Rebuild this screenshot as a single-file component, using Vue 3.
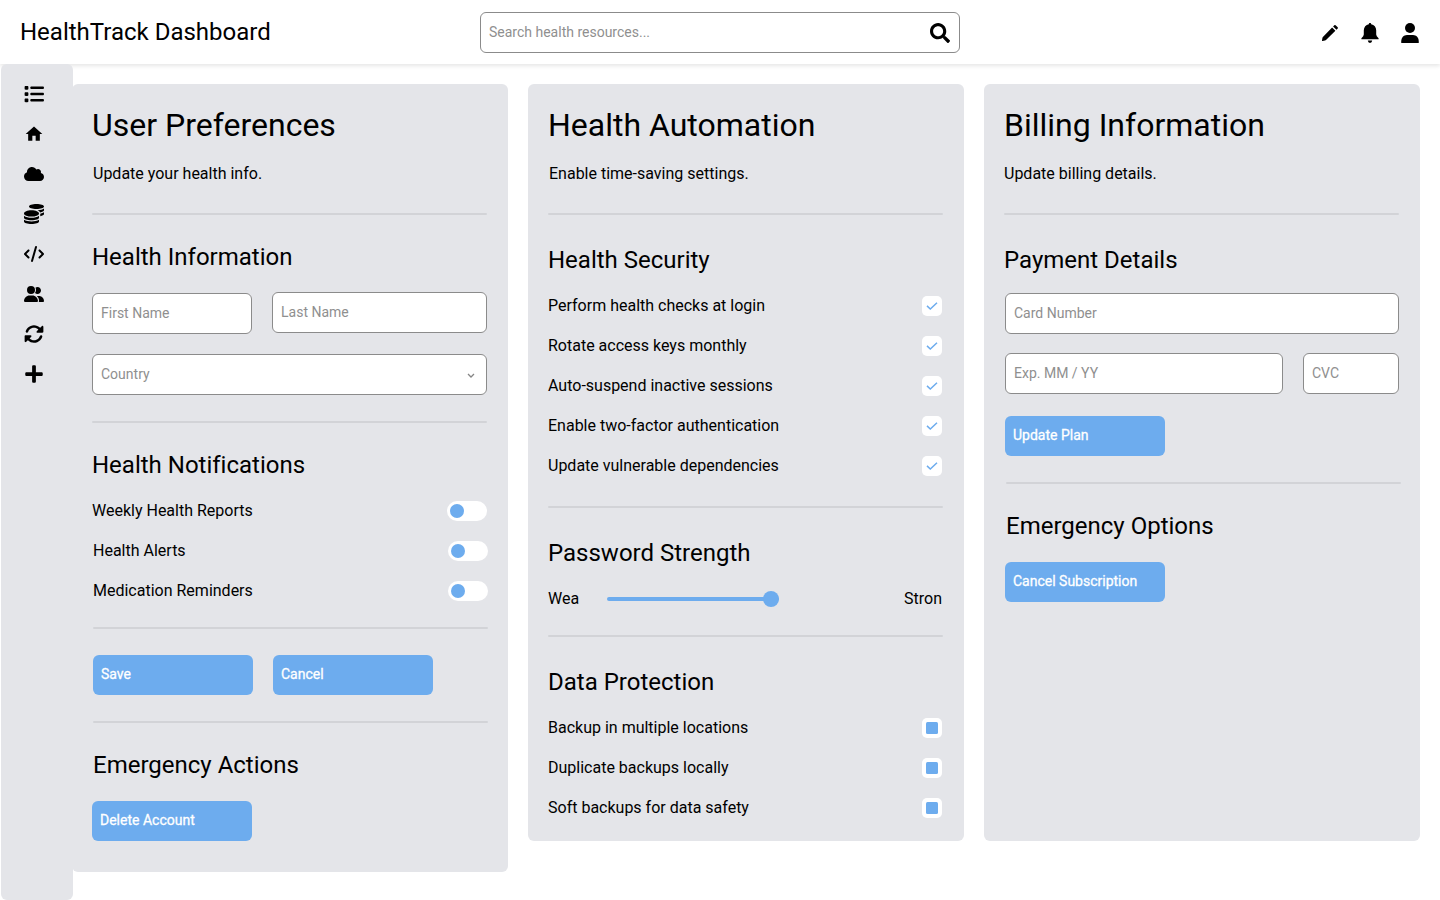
<script setup>
const nav = [
  { name: 'list', w: 20, h: 20, box: '0 0 512 512', d: 'M40 48C26.7 48 16 58.7 16 72v48c0 13.3 10.7 24 24 24H88c13.3 0 24-10.7 24-24V72c0-13.3-10.7-24-24-24H40zM192 64c-17.7 0-32 14.3-32 32s14.3 32 32 32H480c17.7 0 32-14.3 32-32s-14.3-32-32-32H192zm0 160c-17.7 0-32 14.3-32 32s14.3 32 32 32H480c17.7 0 32-14.3 32-32s-14.3-32-32-32H192zm0 160c-17.7 0-32 14.3-32 32s14.3 32 32 32H480c17.7 0 32-14.3 32-32s-14.3-32-32-32H192zM16 232v48c0 13.3 10.7 24 24 24H88c13.3 0 24-10.7 24-24V232c0-13.3-10.7-24-24-24H40c-13.3 0-24 10.7-24 24zM40 368c-13.3 0-24 10.7-24 24v48c0 13.3 10.7 24 24 24H88c13.3 0 24-10.7 24-24V392c0-13.3-10.7-24-24-24H40z' },
  { name: 'home', w: 20, h: 20, box: '0 0 24 24', d: 'M10 20v-6h4v6h5v-8h3L12 3 2 12h3v8z' },
  { name: 'cloud', w: 20, h: 16, box: '0 0 640 512', d: 'M537.6 226.6c4.1-10.7 6.4-22.4 6.4-34.6 0-53-43-96-96-96-19.7 0-38.1 6-53.3 16.2C367 64.2 315.3 32 256 32c-88.4 0-160 71.6-160 160 0 2.7.1 5.4.2 8.1C40.2 219.8 0 273.2 0 336c0 79.5 64.5 144 144 144h368c70.7 0 128-57.3 128-128 0-61.9-44-113.6-102.4-125.4z' },
  { name: 'coins', w: 20, h: 20, box: '0 0 512 512', d: 'M0 405.3V448c0 35.3 86 64 192 64s192-28.7 192-64v-42.7C342.7 434.4 267.2 448 192 448S41.3 434.4 0 405.3zM320 128c106 0 192-28.7 192-64S426 0 320 0 128 28.7 128 64s86 64 192 64zM0 300.4V352c0 35.3 86 64 192 64s192-28.7 192-64v-51.6c-41.3 34-116.9 51.6-192 51.6S41.3 334.4 0 300.4zm416 11c57.3-11.1 96-31.7 96-55.4v-42.7c-23.2 16.4-57.3 27.6-96 34.5v63.6zM192 160C86 160 0 195.8 0 240s86 80 192 80 192-35.8 192-80-86-80-192-80zm219.3 56.3c60-10.8 100.7-32 100.7-56.3v-42.7c-35.5 25.1-96.5 38.6-160.7 41.8 29.5 14.3 51.2 33.5 60 57.2z' },
  { name: 'code', w: 20, h: 16, box: '0 0 640 512', d: 'M392.8 1.2c-17-4.9-34.7 5-39.6 22l-128 448c-4.9 17 5 34.7 22 39.6s34.7-5 39.6-22l128-448c4.9-17-5-34.7-22-39.6zm80.6 120.1c-12.5 12.5-12.5 32.8 0 45.3L562.7 256l-89.4 89.4c-12.5 12.5-12.5 32.8 0 45.3s32.8 12.5 45.3 0l112-112c12.5-12.5 12.5-32.8 0-45.3l-112-112c-12.5-12.5-32.8-12.5-45.3 0zm-306.7 0c-12.5-12.5-32.8-12.5-45.3 0l-112 112c-12.5 12.5-12.5 32.8 0 45.3l112 112c12.5 12.5 32.8 12.5 45.3 0s12.5-32.8 0-45.3L77.3 256l89.4-89.4c12.5-12.5 12.5-32.8 0-45.3z' },
  { name: 'people', w: 20, h: 16, box: '0 0 640 512', d: 'M96 128a128 128 0 1 1 256 0A128 128 0 1 1 96 128zM0 482.3C0 383.8 79.8 304 178.3 304h91.4C368.2 304 448 383.8 448 482.3c0 16.4-13.3 29.7-29.7 29.7H29.7C13.3 512 0 498.7 0 482.3zM609.3 512H471.4c5.4-9.4 8.6-20.3 8.6-32v-8c0-60.7-27.1-115.2-69.8-151.8c2.4-.1 4.7-.2 7.1-.2h61.4C567.8 320 640 392.2 640 481.3c0 17-13.8 30.7-30.7 30.7zM432 256c-31 0-59-12.6-79.3-32.9C372.4 196.5 384 163.6 384 128c0-26.8-6.6-52.1-18.3-74.3C384.3 40.1 407.2 32 432 32c61.9 0 112 50.1 112 112s-50.1 112-112 112z' },
  { name: 'sync', w: 20, h: 20, box: '0 0 512 512', d: 'M142.9 142.9c62.2-62.2 162.7-62.5 225.3-1L327 183c-6.9 6.9-8.9 17.2-5.2 26.2s12.5 14.8 22.2 14.8H472c13.3 0 24-10.7 24-24V72c0-9.7-5.8-18.5-14.8-22.2s-19.3-1.7-26.2 5.2L413.4 96.6c-87.6-86.5-228.7-86.2-315.8 1C73.2 122 55.6 150.7 44.8 181.4c-5.9 16.7 2.9 34.9 19.5 40.8s34.9-2.9 40.8-19.5c7.7-21.8 20.2-42.3 37.8-59.8zM16 312V440c0 9.7 5.8 18.5 14.8 22.2s19.3 1.7 26.2-5.2l41.6-41.6c87.6 86.5 228.7 86.2 315.8-1c24.4-24.4 42.1-53.1 52.9-83.7c5.9-16.7-2.9-34.9-19.5-40.8s-34.9 2.9-40.8 19.5c-7.7 21.8-20.2 42.3-37.8 59.8c-62.2 62.2-162.7 62.5-225.3 1L185 329c6.9-6.9 8.9-17.2 5.2-26.2s-12.5-14.8-22.2-14.8H40c-13.3 0-24 10.7-24 24z' },
  { name: 'plus', w: 20, h: 20, box: '0 0 448 512', d: 'M416 208H272V64c0-17.67-14.33-32-32-32h-32c-17.67 0-32 14.33-32 32v144H32c-17.67 0-32 14.33-32 32v32c0 17.67 14.33 32 32 32h144v144c0 17.67 14.33 32 32 32h32c17.67 0 32-14.33 32-32V304h144c17.67 0 32-14.33 32-32v-32c0-17.67-14.33-32-32-32z' },
]
const notifications = ['Weekly Health Reports', 'Health Alerts', 'Medication Reminders']
const security = [
  'Perform health checks at login',
  'Rotate access keys monthly',
  'Auto-suspend inactive sessions',
  'Enable two-factor authentication',
  'Update vulnerable dependencies',
]
const protection = ['Backup in multiple locations', 'Duplicate backups locally', 'Soft backups for data safety']
</script>

<template>
  <div class="page">
    <header class="topbar">
      <div class="brand">HealthTrack Dashboard</div>
      <div class="search field">
        <span>Search health resources...</span>
        <svg width="20" height="20" viewBox="0 0 512 512"><path d="M505 442.7L405.3 343c-4.5-4.5-10.6-7-17-7H372c27.6-35.3 44-79.7 44-128C416 93.1 322.9 0 208 0S0 93.1 0 208s93.1 208 208 208c48.3 0 92.7-16.4 128-44v16.3c0 6.4 2.5 12.5 7 17l99.7 99.7c9.4 9.4 24.6 9.4 33.9 0l28.3-28.3c9.4-9.4 9.4-24.6.1-34zM208 336c-70.7 0-128-57.2-128-128 0-70.7 57.2-128 128-128 70.7 0 128 57.2 128 128 0 70.7-57.2 128-128 128z" /></svg>
      </div>
      <div class="actions">
        <svg width="20" height="20" viewBox="0 0 20 20"><path d="M12.1 4.4 15.4 7.7 6 17.1Q5.6 17.5 5 17.6L2.6 18Q1.9 18 2 17.4L2.4 15Q2.5 14.3 2.9 13.9zM13.1 3.4 14.3 2.2Q15 1.7 15.6 2.2L17.7 4.3Q18.2 4.9 17.7 5.6L16.5 6.8z" /></svg>
        <svg width="20" height="20" viewBox="0 0 20 20"><path d="M10 0C10.7 0 11.2.5 11.2 1.2 14.2 1.8 16.2 4.2 16.2 7.3V11.5Q16.2 13 18.6 15.2V16.2H1.4V15.2Q3.8 13 3.8 11.5V7.3C3.8 4.2 5.8 1.8 8.8 1.2 8.8.5 9.3 0 10 0zM7.8 17.6H12.2Q12 20 10 20T7.8 17.6z" /></svg>
        <svg width="20" height="20" viewBox="0 0 20 20"><circle cx="10" cy="5" r="5" /><path d="M1.25 20V18.2C1.25 14.8 3.6 12 7 12H13C16.4 12 18.75 14.8 18.75 18.2V20z" /></svg>
      </div>
    </header>

    <div class="body">
      <nav class="sidebar">
        <span v-for="icon in nav" :key="icon.name" class="nav-item">
          <svg :width="icon.w" :height="icon.h" :viewBox="icon.box"><path :d="icon.d" /></svg>
        </span>
      </nav>

      <main class="cards">
        <section class="card card-tall">
          <h1>User Preferences</h1>
          <p class="lead shift">Update your health info.</p>
          <hr />
          <h2>Health Information</h2>
          <div class="row names">
            <div class="field first">First Name</div>
            <div class="field last">Last Name</div>
          </div>
          <div class="field country">
            <span>Country</span>
            <svg width="8" height="6" viewBox="0 0 8 6"><path d="M1 1 4 4 7 1" fill="none" stroke="#858585" stroke-width="1.3" /></svg>
          </div>
          <hr class="gap-26" />
          <h2>Health Notifications</h2>
          <div class="options">
            <div v-for="(label, i) in notifications" :key="label" class="option" :class="{ 'text-shift': i > 0, 'end-shift': i > 0 }">
              <span>{{ label }}</span><i class="toggle"></i>
            </div>
          </div>
          <hr class="gap-26 shift" />
          <div class="row buttons shift">
            <button>Save</button>
            <button>Cancel</button>
          </div>
          <hr class="gap-26 shift" />
          <h2 class="shift">Emergency Actions</h2>
          <button class="solo">Delete Account</button>
        </section>

        <section class="card">
          <h1>Health Automation</h1>
          <p class="lead shift">Enable time-saving settings.</p>
          <hr />
          <h2 class="low">Health Security</h2>
          <div class="options">
            <div v-for="label in security" :key="label" class="option inset">
              <span>{{ label }}</span>
              <i class="check"><svg width="12" height="8" viewBox="0 0 12 8"><path d="M1 3.9 4.3 7 11 .7" fill="none" stroke="#6dacee" stroke-width="1.5" /></svg></i>
            </div>
          </div>
          <hr class="gap-30" />
          <h2 class="low">Password Strength</h2>
          <div class="options">
            <div class="strength"><span class="weak">Wea</span><i class="track"><b class="thumb"></b></i><span>Stron</span></div>
          </div>
          <hr class="gap-26" />
          <h2 class="low">Data Protection</h2>
          <div class="options">
            <div v-for="label in protection" :key="label" class="option inset">
              <span>{{ label }}</span><i class="check"><b class="mark"></b></i>
            </div>
          </div>
        </section>

        <section class="card">
          <h1>Billing Information</h1>
          <p class="lead">Update billing details.</p>
          <hr />
          <h2 class="low">Payment Details</h2>
          <div class="billing">
            <div class="field">Card Number</div>
            <div class="row expiry">
              <div class="field exp">Exp. MM / YY</div>
              <div class="field cvc">CVC</div>
            </div>
            <button class="solo">Update Plan</button>
          </div>
          <hr class="gap-26 shift-2" />
          <h2 class="shift-2">Emergency Options</h2>
          <button class="solo shift">Cancel Subscription</button>
        </section>
      </main>
    </div>
  </div>
</template>

<style>
body {
  margin: 0;
  background: #fff;
}
</style>

<style scoped>
* {
  box-sizing: border-box;
}
.page {
  width: 1440px;
  height: 900px;
  overflow: hidden;
  background: #fff;
  color: #000;
  font: 400 16px/20px Roboto, sans-serif;
  font-variant-ligatures: none;
}
svg {
  display: block;
  flex: none;
}
.topbar {
  position: relative;
  display: grid;
  grid-template-columns: 460px 480px 1fr;
  height: 64px;
  padding: 12px 20px 0;
  background: #fff;
  box-shadow: 0 2px 4px rgba(0, 0, 0, 0.1);
}
.brand {
  padding-top: 6px;
  font-size: 24px;
  line-height: 28px;
}
.field {
  height: 41px;
  padding: 11px 8px 0;
  border: 1px solid #8b8b8b;
  border-radius: 6px;
  background: #fff;
  color: #8f8f8f;
  font-size: 14px;
  line-height: 16px;
}
.search {
  display: flex;
  justify-content: space-between;
}
.search svg {
  margin-top: -1px;
  margin-right: 1px;
  fill: #000;
}
.actions {
  display: flex;
  justify-content: flex-end;
  gap: 20px;
  padding-top: 11px;
}
.body {
  display: flex;
  height: 836px;
  padding-left: 1px;
}
.sidebar {
  position: relative;
  flex: none;
  width: 72px;
  height: 836px;
  padding: 20px 6px 0 0;
  border-radius: 6px;
  background: #e4e5e9;
}
.nav-item {
  display: flex;
  align-items: center;
  justify-content: center;
  height: 20px;
  margin-bottom: 20px;
}
.cards {
  display: flex;
  align-items: flex-start;
  gap: 20px;
  margin: 20px 0 0 -1px;
}
.card {
  width: 436px;
  height: 757px;
  padding: 20px 21px 0 20px;
  border-radius: 6px;
  background: #e4e5e9;
}
.card-tall {
  height: 788px;
}
h1,
h2,
p {
  margin: 0;
  font-weight: 400;
}
h1 {
  font-size: 32px;
  line-height: 42px;
}
.lead {
  margin-top: 18px;
}
hr {
  height: 2px;
  margin: 29px 0 0;
  border: 0;
  border-radius: 1px;
  background: #d2d3d7;
}
.gap-26 {
  margin-top: 26px;
}
.gap-30 {
  margin-top: 30px;
}
h2 {
  margin-top: 28px;
  font-size: 24px;
  line-height: 28px;
}
h2.low {
  margin-top: 31px;
}
.shift {
  margin-left: 1px;
  margin-right: -1px;
}
.shift-2 {
  margin-left: 2px;
  margin-right: -2px;
}
.row {
  display: flex;
  gap: 20px;
}
.names {
  margin-top: 21px;
}
.first {
  width: 160px;
  margin-top: 1px;
}
.last {
  flex: 1;
}
.country {
  display: flex;
  justify-content: space-between;
  margin-top: 20px;
}
.country svg {
  margin: 7px 3px 0 0;
}
.options {
  display: grid;
  gap: 20px;
  margin-top: 22px;
}
.option {
  display: flex;
  justify-content: space-between;
  height: 20px;
}
.inset {
  padding-right: 1px;
}
.text-shift {
  padding-left: 1px;
}
.end-shift {
  margin-right: -1px;
}
.toggle {
  width: 40px;
  height: 20px;
  padding: 3px;
  border-radius: 10px;
  background: #fff;
}
.toggle::before {
  content: '';
  display: block;
  width: 14px;
  height: 14px;
  border-radius: 50%;
  background: #6dacee;
}
button {
  display: block;
  width: 160px;
  height: 40px;
  padding: 0 8px 2px;
  border: 0;
  border-radius: 6px;
  background: #6dacee;
  color: #fff;
  font: 400 14px/16px Roboto, sans-serif;
  text-align: left;
  -webkit-text-stroke: 0.3px #fff;
}
.buttons {
  margin-top: 26px;
}
.solo {
  margin-top: 22px;
}
.check {
  display: grid;
  place-items: center;
  width: 20px;
  height: 20px;
  border-radius: 5px;
  background: #fff;
}
.mark {
  width: 12px;
  height: 12px;
  border-radius: 1.5px;
  background: #6dacee;
}
.strength {
  display: flex;
  align-items: center;
  justify-content: space-between;
  height: 20px;
  padding-right: 1px;
}
.weak {
  width: 59px;
}
.track {
  display: flex;
  align-items: center;
  justify-content: flex-end;
  width: 172px;
  height: 4px;
  margin-right: auto;
  border-radius: 2px;
  background: #6dacee;
}
.thumb {
  flex: none;
  width: 16px;
  height: 16px;
  border-radius: 50%;
  background: #6dacee;
}
.billing {
  display: grid;
  margin: 19px 0 0 1px;
}
.expiry {
  margin-top: 19px;
}
.exp {
  width: 278px;
}
.cvc {
  flex: 1;
}
</style>
